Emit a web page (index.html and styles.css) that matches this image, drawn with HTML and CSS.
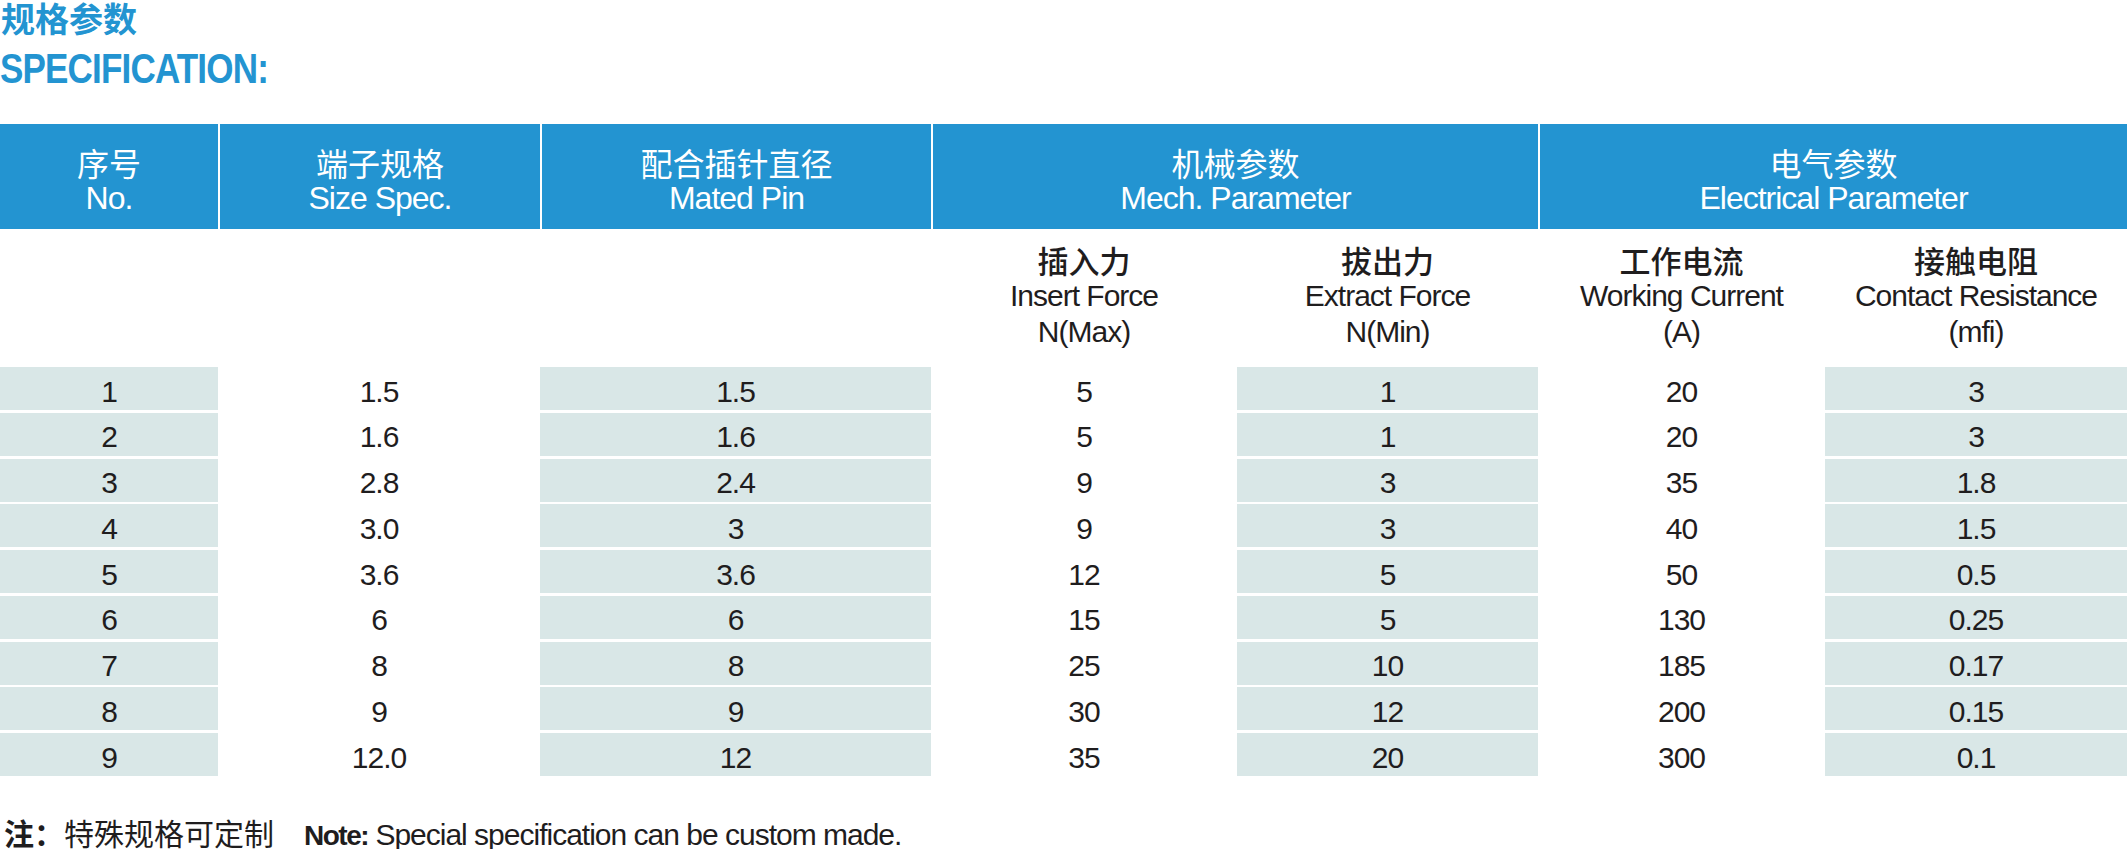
FILE: index.html
```html
<!DOCTYPE html>
<html lang="zh-CN">
<head>
<meta charset="utf-8">
<title>规格参数 SPECIFICATION</title>
<link rel="stylesheet" href="styles.css">
</head>
<body>
<div class="page">
  <div class="title-cn">规格参数</div>
  <div class="title-en">SPECIFICATION:</div>

  <div class="spec">
    <div class="head">
      <div class="hcell"><span class="cn">序号</span><span class="en">No.</span></div>
      <div class="hcell"><span class="cn">端子规格</span><span class="en">Size Spec.</span></div>
      <div class="hcell"><span class="cn">配合插针直径</span><span class="en">Mated Pin</span></div>
      <div class="hcell span2"><span class="cn">机械参数</span><span class="en">Mech. Parameter</span></div>
      <div class="hcell span2"><span class="cn">电气参数</span><span class="en">Electrical Parameter</span></div>
    </div>

    <div class="sub">
      <div class="scell"></div>
      <div class="scell"></div>
      <div class="scell"></div>
      <div class="scell"><span class="cn">插入力</span><span class="en">Insert Force</span><span class="en">N(Max)</span></div>
      <div class="scell"><span class="cn">拔出力</span><span class="en">Extract Force</span><span class="en">N(Min)</span></div>
      <div class="scell"><span class="cn">工作电流</span><span class="en">Working Current</span><span class="en">(A)</span></div>
      <div class="scell"><span class="cn">接触电阻</span><span class="en">Contact Resistance</span><span class="en">(mfi)</span></div>
    </div>

    <div class="body">
      <div class="row"><div>1</div><div>1.5</div><div>1.5</div><div>5</div><div>1</div><div>20</div><div>3</div></div>
      <div class="row"><div>2</div><div>1.6</div><div>1.6</div><div>5</div><div>1</div><div>20</div><div>3</div></div>
      <div class="row"><div>3</div><div>2.8</div><div>2.4</div><div>9</div><div>3</div><div>35</div><div>1.8</div></div>
      <div class="row"><div>4</div><div>3.0</div><div>3</div><div>9</div><div>3</div><div>40</div><div>1.5</div></div>
      <div class="row"><div>5</div><div>3.6</div><div>3.6</div><div>12</div><div>5</div><div>50</div><div>0.5</div></div>
      <div class="row"><div>6</div><div>6</div><div>6</div><div>15</div><div>5</div><div>130</div><div>0.25</div></div>
      <div class="row"><div>7</div><div>8</div><div>8</div><div>25</div><div>10</div><div>185</div><div>0.17</div></div>
      <div class="row"><div>8</div><div>9</div><div>9</div><div>30</div><div>12</div><div>200</div><div>0.15</div></div>
      <div class="row"><div>9</div><div>12.0</div><div>12</div><div>35</div><div>20</div><div>300</div><div>0.1</div></div>
    </div>
  </div>

  <div class="note">
    <span class="note-label">注：</span><span class="note-cn">特殊规格可定制</span><span class="note-en"><span class="note-strong">Note:</span> Special specification can be custom made.</span>
  </div>
</div>
</body>
</html>
```

FILE: styles.css
```css
:root {
  --blue: #2394d1;
  --gray: #d9e7e7;
  --ink: #1f1d1e;
  --cols: 218px 322px 391px 306px 301px 287px 302px;
  --en: "Liberation Sans", Arial, sans-serif;
  --cjk: "Noto Sans CJK SC", "Noto Sans CJK TC", sans-serif;
}

html, body {
  margin: 0;
  padding: 0;
  background: #ffffff;
}

.page {
  width: 2128px;
  color: var(--ink);
  font-family: var(--en);
}

.title-cn {
  font-family: var(--cjk);
  font-weight: 700;
  font-size: 34px;
  line-height: 36px;
  color: var(--blue);
  padding-left: 1px;
}

.title-en {
  margin-top: 9px;
  width: max-content;
  font-family: var(--en);
  font-weight: 700;
  font-size: 43px;
  line-height: 46px;
  letter-spacing: -1px;
  color: var(--blue);
  transform: scaleX(0.814);
  transform-origin: left center;
}

.spec {
  margin-top: 33px;
}

.head,
.sub,
.row {
  display: grid;
  grid-template-columns: var(--cols);
}

.head {
  height: 105px;
}

.hcell {
  background: var(--blue);
  color: #ffffff;
  border-left: 2px solid #ffffff;
  display: flex;
  flex-direction: column;
  align-items: center;
  padding-top: 20px;
  box-sizing: border-box;
}

.hcell:first-child {
  border-left: none;
}

.hcell.span2 {
  grid-column: span 2;
}

.hcell .cn {
  font-family: var(--cjk);
  font-size: 32px;
  line-height: 36px;
  font-weight: 400;
}

.hcell .en {
  font-family: var(--en);
  font-size: 32px;
  line-height: 36px;
  letter-spacing: -1px;
}

.sub {
  height: 138px;
}

.scell {
  display: flex;
  flex-direction: column;
  align-items: center;
  padding-top: 13px;
  box-sizing: border-box;
}

.scell .cn {
  font-family: var(--cjk);
  font-size: 31px;
  line-height: 36px;
  font-weight: 500;
}

.scell .en {
  font-family: var(--en);
  font-size: 30px;
  line-height: 36px;
  letter-spacing: -1px;
}

.body {
  display: flex;
  flex-direction: column;
  gap: 2.75px;
}

.row {
  height: 43px;
}

.row > div {
  display: flex;
  align-items: center;
  justify-content: center;
  padding-top: 6px;
  box-sizing: border-box;
  font-size: 30px;
  letter-spacing: -1px;
}

.row > div:nth-child(odd) {
  background: var(--gray);
}

.note {
  margin-top: 40px;
  display: flex;
  align-items: baseline;
  font-size: 30px;
  line-height: 32px;
  padding-left: 4px;
}

.note-label {
  font-family: var(--cjk);
  font-weight: 700;
}

.note-cn {
  font-family: var(--cjk);
  font-weight: 400;
}

.note-en {
  margin-left: 30px;
  font-family: var(--en);
  letter-spacing: -1px;
}

.note-strong {
  font-weight: 700;
  font-size: 28px;
  letter-spacing: -1.5px;
}
```
